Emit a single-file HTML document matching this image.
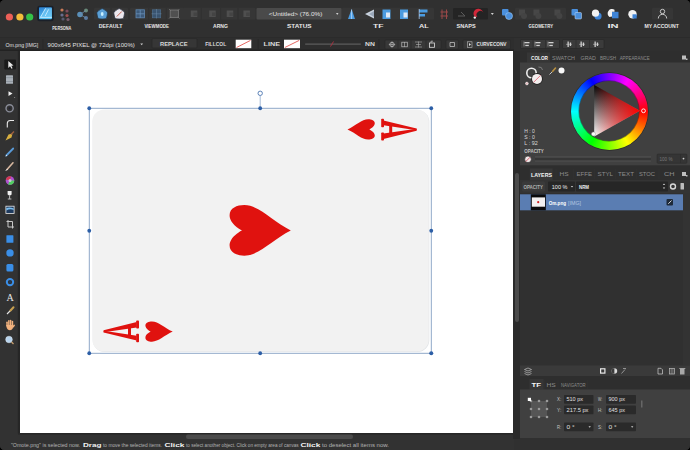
<!DOCTYPE html>
<html><head><meta charset="utf-8">
<style>
*{margin:0;padding:0;box-sizing:border-box}
html,body{width:690px;height:450px;overflow:hidden;background:#000}
body{position:relative;font-family:"Liberation Sans",sans-serif}
svg{position:absolute;left:0;top:0}
.wheel{position:absolute;left:570.5px;top:72.5px;width:77px;height:77px;border-radius:50%;
background:conic-gradient(from 90deg,#ff0000,#ffff00,#00ff00,#00ffff,#0000ff,#ff00ff,#ff0000);box-shadow:0 0 0 0.7px rgba(0,0,0,0.35)}
.wheel:after{content:"";position:absolute;left:8.5px;top:8.5px;width:60px;height:60px;border-radius:50%;background:#404040;box-shadow:0 0 0 0.7px rgba(0,0,0,0.35)}
</style></head><body>
<svg width="690" height="450" viewBox="0 0 690 450" font-family="Liberation Sans" id="base">
<!-- window -->
<rect x="0" y="0" width="690" height="450" rx="4.5" fill="#2f2f2f"/>
<!-- main toolbar -->
<path d="M0,4.5 A4.5,4.5 0 0 1 4.5,0 H685.5 A4.5,4.5 0 0 1 690,4.5 V37 H0 Z" fill="#303030"/>
<!-- ===== toolbar ===== -->
<g id="tb">
<circle cx="9.4" cy="17" r="3.6" fill="#ec5f57"/>
<circle cx="19.9" cy="17" r="3.6" fill="#f3bd3a"/>
<circle cx="29.7" cy="17" r="3.6" fill="#35c148"/>
<defs><linearGradient id="lg" x1="0" y1="0" x2="0.3" y2="1"><stop offset="0" stop-color="#2a7fd0"/><stop offset="1" stop-color="#56c4f6"/></linearGradient></defs>
<rect x="37.2" y="5.7" width="16.5" height="15.5" rx="2.5" fill="#1a2029"/>
<rect x="39" y="7.3" width="12.9" height="12" rx="0.8" fill="url(#lg)"/>
<path d="M40.3,17.6 L45.6,8.3 L51.9,8.3 L51.9,17.6 Z" fill="#7fd2fa" opacity="0.55"/>
<path d="M40.3,17.6 L45.6,8.3 M45.2,16 L48.5,9.5 M40.3,17.4 H51.9" stroke="#c8ecff" stroke-width="0.9" fill="none"/>
<circle cx="62.0" cy="10.0" r="1.6" fill="#c87a58"/>
<circle cx="67.0" cy="11.0" r="1.6" fill="#7a4b5b"/>
<circle cx="62.0" cy="15.0" r="1.6" fill="#6a6d8e"/>
<circle cx="67.0" cy="15.5" r="1.6" fill="#a05050"/>
<circle cx="63.0" cy="19.0" r="1.6" fill="#585a70"/>
<circle cx="68.0" cy="19.5" r="1.6" fill="#7a5a6a"/>
<circle cx="80" cy="14.5" r="2.8" fill="#5a8fb8"/><circle cx="86" cy="10.5" r="2" fill="#6a8a7a"/><circle cx="86" cy="18" r="2" fill="#5a7aa0"/><path d="M80,14.5 L86,10.5 M80,14.5 L86,18" stroke="#6b8aa6" stroke-width="0.8"/>
<rect x="94.0" y="7.8" width="34.0" height="11.8" rx="1.2" fill="#363636"/>
<rect x="130.0" y="7.8" width="54.0" height="11.8" rx="1.2" fill="#363636"/>
<rect x="183.0" y="7.8" width="72.5" height="11.8" rx="1.2" fill="#363636"/>
<rect x="342.0" y="7.8" width="92.0" height="11.8" rx="1.2" fill="#363636"/>
<rect x="515.0" y="7.8" width="51.0" height="11.8" rx="1.2" fill="#363636"/>
<rect x="652.0" y="7.8" width="21.0" height="11.8" rx="1.2" fill="#363636"/>
<path d="M111,8 V19.5 M148.7,8 V19.5 M166.2,8 V19.5 M201.4,8 V19.5 M220.6,8 V19.5 M238,8 V19.5" stroke="#2e2e2e" stroke-width="0.6"/>
<path d="M102.2,8.6 Q103,8.6 107.4,11.9 Q108,12.5 106.6,18 Q106.2,19 102.2,19 Q98.2,19 97.8,18 Q96.4,12.5 97,11.9 Q101.4,8.6 102.2,8.6 Z" fill="#5a9fd6" stroke="#203040" stroke-width="0.7"/><ellipse cx="102.2" cy="14" rx="1.4" ry="2" fill="#c8f0ff"/>
<path d="M119.2,8.6 Q120,8.6 124.4,11.9 Q125,12.5 123.6,18 Q123.2,19 119.2,19 Q115.2,19 114.8,18 Q113.4,12.5 114,11.9 Q118.4,8.6 119.2,8.6 Z" fill="#ece8ee" stroke="#202838" stroke-width="0.7"/><path d="M116.8,16.5 L121.8,11.5" stroke="#c06050" stroke-width="1"/>
<rect x="136" y="9.8" width="8.4" height="8" fill="#3d5a7a" stroke="#5f88b2" stroke-width="0.8"/><path d="M140.2,9.8 V17.8 M136,13.8 H144.4" stroke="#6f98c2" stroke-width="0.7"/>
<rect x="152.3" y="9.8" width="8.4" height="8" fill="#3a5470" stroke="#4f7090" stroke-width="0.6"/><path d="M151.5,13.8 H161.5 M156.5,9 V18.5" stroke="#6a8aa8" stroke-width="0.5"/>
<rect x="170.2" y="10" width="8.2" height="7.6" fill="#505050" stroke="#7a7a7a" stroke-width="0.8"/><path d="M169,9 L171,11 M179.5,9 L177.5,11 M169,18.6 L171,16.6 M179.5,18.6 L177.5,16.6" stroke="#7a7a7a" stroke-width="0.7"/>
<rect x="190.8" y="10.5" width="6.5" height="6.5" fill="#4f4f4f"/><rect x="193.5" y="12.5" width="3.5" height="3.5" fill="#444"/>
<rect x="209.2" y="10.5" width="6.5" height="6.5" fill="#4f4f4f"/><rect x="212.0" y="12.5" width="3.5" height="3.5" fill="#444"/>
<rect x="226.7" y="10.5" width="6.5" height="6.5" fill="#4f4f4f"/><rect x="229.4" y="12.5" width="3.5" height="3.5" fill="#444"/>
<rect x="243.4" y="10.5" width="6.5" height="6.5" fill="#4f4f4f"/><rect x="246.2" y="12.5" width="3.5" height="3.5" fill="#444"/>
<rect x="256.5" y="8" width="85" height="11.6" rx="1" fill="#4a4a4a"/>
<text x="268.8" y="15.8" textLength="53.5" lengthAdjust="spacingAndGlyphs" font-size="5.8" font-weight="normal" fill="#e6e6e6">&lt;Untitled&gt; (76.0%)</text>
<path d="M336,13 L338.5,13 L337.25,15 Z" fill="#cfcfcf"/>
<polygon points="351.6,9 355,19 348,19" fill="#4b9be0"/><path d="M351.6,9.5 V19" stroke="#cfe6ff" stroke-width="0.7"/>
<polygon points="374,9.5 374,18.5 365,14" fill="#c9d2de"/><polygon points="374,11 374,17 369,14" fill="#9aa8ba"/>
<rect x="382.5" y="9.5" width="8" height="9.5" fill="#4b9be0"/><rect x="386" y="12.5" width="4" height="5" fill="#dde8f5"/>
<rect x="400" y="9.5" width="8" height="9.5" fill="#4b9be0"/><rect x="403.5" y="12.5" width="4" height="5" fill="#dde8f5"/>
<rect x="419" y="9.5" width="8.5" height="3" fill="#4b9be0"/><rect x="419" y="14" width="6" height="2.5" fill="#4b9be0"/><path d="M419.2,9 V19" stroke="#a9c8ea" stroke-width="0.8"/>
<path d="M442,9.5 V19 M446.5,9.5 V19 M440.5,12 H448 M440.5,16 H448" stroke="#9a4848" stroke-width="1"/>
<rect x="453" y="8" width="35" height="11.6" rx="1" fill="#242424"/>
<path d="M458,16 H465 M461,12 L465,16" stroke="#5a5a5a" stroke-width="1"/>
<path d="M474.5,16.5 A4.5,4.5 0 0 1 482,10.5 L483.5,12.5 A2.2,2.2 0 0 0 477.3,17 Z" fill="#d0283a"/><circle cx="474.8" cy="17.6" r="1.2" fill="#eee"/>
<path d="M490.8,13 L493.8,13 L492.3,15 Z" fill="#d0d0d0"/>
<rect x="502" y="9" width="6.5" height="6.5" rx="1" fill="#4a8fdc"/><circle cx="509" cy="16" r="3.5" fill="#4a8fdc" stroke="#9ccaf5" stroke-width="0.6"/>
<rect x="519.0" y="9.5" width="6" height="6" fill="#474747"/><circle cx="524.0" cy="16" r="3" fill="#444"/>
<rect x="533.4" y="9.5" width="6" height="6" fill="#474747"/><circle cx="538.4" cy="16" r="3" fill="#444"/>
<rect x="554.4" y="9.5" width="6" height="6" fill="#474747"/><circle cx="559.4" cy="16" r="3" fill="#444"/>
<rect x="571.5" y="9" width="6.5" height="6.5" rx="1" fill="#4a8fdc"/><rect x="575" y="12.5" width="6.5" height="6.5" rx="1" fill="#4a8fdc" stroke="#cde3fa" stroke-width="0.5"/>
<circle cx="598" cy="16" r="3.6" fill="#3f84d6"/><circle cx="595.5" cy="13.2" r="3.6" fill="#f2f2f2"/>
<rect x="612" y="11.8" width="6.5" height="6.5" fill="#3f84d6"/><path d="M609.5,17 A4,4 0 0 1 614.5,9.8 L614.5,11.8 L612,11.8 L612,16.5 Z" fill="#f2f2f2"/>
<circle cx="632.5" cy="14.3" r="4.2" fill="#f2f2f2"/><rect x="632.5" y="14.3" width="4.2" height="4.2" fill="#3f84d6"/>
<circle cx="662.5" cy="11.5" r="2.2" fill="none" stroke="#d6d6d6" stroke-width="0.9"/><path d="M658.3,18.5 A4.2,4.2 0 0 1 666.7,18.5" fill="none" stroke="#d6d6d6" stroke-width="0.9"/>
<text x="52.3" y="30.4" textLength="19.1" lengthAdjust="spacingAndGlyphs" font-size="5.9" font-weight="bold" fill="#e8e8e8">PERSONA</text>
<text x="98.7" y="27.7" textLength="23.8" lengthAdjust="spacingAndGlyphs" font-size="5.9" font-weight="bold" fill="#e8e8e8">DEFAULT</text>
<text x="144.4" y="27.7" textLength="24.6" lengthAdjust="spacingAndGlyphs" font-size="5.9" font-weight="bold" fill="#e8e8e8">VIEWMODE</text>
<text x="213.0" y="27.7" textLength="14.8" lengthAdjust="spacingAndGlyphs" font-size="5.9" font-weight="bold" fill="#e8e8e8">ARNG</text>
<text x="287.0" y="27.7" textLength="24.6" lengthAdjust="spacingAndGlyphs" font-size="5.9" font-weight="bold" fill="#e8e8e8">STATUS</text>
<text x="373.0" y="27.7" textLength="10.5" lengthAdjust="spacingAndGlyphs" font-size="5.9" font-weight="bold" fill="#e8e8e8">TF</text>
<text x="419.0" y="27.7" textLength="9.7" lengthAdjust="spacingAndGlyphs" font-size="5.9" font-weight="bold" fill="#e8e8e8">AL</text>
<text x="456.5" y="27.7" textLength="19.1" lengthAdjust="spacingAndGlyphs" font-size="5.9" font-weight="bold" fill="#e8e8e8">SNAPS</text>
<text x="528.6" y="27.7" textLength="24.4" lengthAdjust="spacingAndGlyphs" font-size="5.9" font-weight="bold" fill="#e8e8e8">GEOMETRY</text>
<text x="607.4" y="27.7" textLength="11.1" lengthAdjust="spacingAndGlyphs" font-size="5.9" font-weight="bold" fill="#e8e8e8">IN</text>
<text x="644.4" y="27.7" textLength="34.5" lengthAdjust="spacingAndGlyphs" font-size="5.9" font-weight="bold" fill="#e8e8e8">MY ACCOUNT</text>
</g>
<!-- context toolbar -->
<rect x="0" y="37" width="514" height="14" fill="#2e2e2e"/><rect x="0" y="49.6" width="514" height="1.4" fill="#222222"/>
<g id="ctx">
<text x="5.5" y="46.6" textLength="32.8" lengthAdjust="spacingAndGlyphs" font-size="6.0" font-weight="normal" fill="#e0e0e0">Om.png [IMG]</text>
<rect x="42.5" y="39" width="0.8" height="10" fill="#262626"/>
<text x="47.6" y="46.6" textLength="87.2" lengthAdjust="spacingAndGlyphs" font-size="6.0" font-weight="normal" fill="#e0e0e0">900x645 PIXEL @ 72dpi (100%)</text>
<path d="M140.3,43.5 L143.1,43.5 L141.7,45.3 Z" fill="#cfcfcf"/>
<rect x="152" y="38.6" width="45" height="9.4" rx="1" fill="#363636" stroke="#262626" stroke-width="0.6"/>
<text x="160.0" y="46.4" textLength="27.5" lengthAdjust="spacingAndGlyphs" font-size="5.0" font-weight="bold" fill="#d8d8d8">REPLACE</text>
<text x="205.2" y="46.4" textLength="21.0" lengthAdjust="spacingAndGlyphs" font-size="5.0" font-weight="bold" fill="#d8d8d8">FILLCOL</text>
<rect x="235.7" y="39.7" width="15.6" height="8.5" fill="#ffffff"/><path d="M236.5,47.5 L250.5,40.4" stroke="#e0403a" stroke-width="0.8"/>
<rect x="257.8" y="39" width="0.8" height="10" fill="#262626"/>
<text x="263.5" y="46.4" textLength="16.5" lengthAdjust="spacingAndGlyphs" font-size="5.0" font-weight="bold" fill="#d8d8d8">LINE</text>
<rect x="284" y="39.7" width="16" height="8.5" fill="#ffffff"/><path d="M284.8,47.5 L299.2,40.4" stroke="#e0403a" stroke-width="0.8"/>
<rect x="305" y="43.4" width="56" height="1.3" rx="0.6" fill="#5c5c5c"/>
<path d="M330.5,46.5 L333.5,41.5" stroke="#b03040" stroke-width="0.9"/>
<text x="365.0" y="46.4" textLength="9.8" lengthAdjust="spacingAndGlyphs" font-size="5.0" font-weight="bold" fill="#d8d8d8">NN</text>
<rect x="378.5" y="39" width="0.8" height="10" fill="#262626"/>
<rect x="385" y="40" width="56" height="9" rx="1" fill="#383838" stroke="#262626" stroke-width="0.6"/>
<path d="M398,40.5 V48.5 M411,40.5 V48.5 M426,40.5 V48.5" stroke="#262626" stroke-width="0.6"/>
<circle cx="392" cy="44.5" r="2.2" fill="none" stroke="#cfcfcf" stroke-width="0.7"/><path d="M392,41.3 V47.7 M388.8,44.5 H395.2" stroke="#cfcfcf" stroke-width="0.5"/>
<rect x="401.8" y="42.2" width="5.5" height="4.6" fill="none" stroke="#bdbdbd" stroke-width="0.7"/><path d="M404.5,42 V47" stroke="#bdbdbd" stroke-width="0.6"/>
<path d="M415,42 H422 M415,47 H422 M418.5,41.5 V47.5 M416,44.5 H421" stroke="#b0b0b0" stroke-width="0.6"/>
<rect x="429.5" y="43" width="5" height="4.3" fill="none" stroke="#e0e0e0" stroke-width="0.8"/><path d="M431,43 V41.2 H433" stroke="#e0e0e0" stroke-width="0.6" fill="none"/>
<rect x="446" y="40" width="12.5" height="9" rx="1" fill="#383838" stroke="#262626" stroke-width="0.6"/>
<path d="M450,42.5 H454.5 V46.5 H450 Z" fill="none" stroke="#cfcfcf" stroke-width="0.7"/>
<rect x="463" y="40" width="47.5" height="9" rx="1" fill="#383838" stroke="#262626" stroke-width="0.6"/>
<rect x="467.5" y="41.8" width="4.5" height="5.5" fill="none" stroke="#bdbdbd" stroke-width="0.6"/><path d="M469,43 L471,44.5 L469,46 Z" fill="#e0e0e0"/>
<text x="476.5" y="46.4" textLength="30.0" lengthAdjust="spacingAndGlyphs" font-size="5.0" font-weight="bold" fill="#e4e4e4">CURVECONV</text>
</g>
<!-- left toolbar -->
<rect x="0" y="51" width="20" height="390" fill="#323232"/><rect x="17.8" y="51" width="2.2" height="382.5" fill="#262626"/>
<g id="left">
<rect x="4.3" y="59.5" width="11.7" height="10.1" rx="1" fill="#1a1a1a"/>
<path d="M8.3,61 L8.3,68 L10,66.3 L11.5,68.8 L12.6,68.2 L11.3,65.8 L13.5,65.6 Z" fill="#e8e8e8"/>
<rect x="6" y="75.2" width="7" height="8.5" rx="0.5" fill="#a9b0b8"/><rect x="6" y="77.5" width="7" height="0.6" fill="#7d858e"/><rect x="6" y="81" width="7" height="0.6" fill="#7d858e"/>
<path d="M8.5,91.3 L12.5,93.6 L8.5,96 Z" fill="#f0f0f0"/><circle cx="14.6" cy="97.5" r="0.6" fill="#888"/>
<circle cx="9.6" cy="108.3" r="3.6" fill="none" stroke="#8a8d99" stroke-width="1.4"/><circle cx="9.6" cy="108.3" r="1" fill="#202030"/>
<path d="M7.3,127.5 V123.5 Q7.3,120.5 10.3,120.5 H14" fill="none" stroke="#e8e8e8" stroke-width="1.1"/>
<path d="M5.5,140.5 L8.5,134.5 L12.5,133.5 L11.5,137.5 Z" fill="#d8b040"/><path d="M11,134.5 L14,131.5" stroke="#a06040" stroke-width="1.2"/>
<path d="M6.3,155.5 L13.2,148.5" stroke="#5a9bd8" stroke-width="1.8" stroke-linecap="round"/><path d="M5.8,156.2 L7,155" stroke="#e8e8e8" stroke-width="1"/>
<path d="M7,169.5 L13,162.8" stroke="#d8b8a0" stroke-width="1.6" stroke-linecap="round"/><path d="M5.8,170.8 L7.5,169" stroke="#f0f0f0" stroke-width="1"/>
<circle cx="10" cy="180.5" r="4.3" fill="#b050d0"/><path d="M10,180.5 L14.3,180.5 A4.3,4.3 0 0 1 8,184.3 Z" fill="#50d060"/><path d="M10,180.5 L5.8,179.5 A4.3,4.3 0 0 1 11,176.3 Z" fill="#d03a50"/><circle cx="10" cy="180.5" r="1.5" fill="#c8c8d8"/>
<path d="M7.6,190.9 H11.6 V194.5 Q9.6,196.5 7.6,194.5 Z" fill="#f0f0f0"/><path d="M9.6,195.5 V198.8 M7.8,199 H11.4" stroke="#e0e0e0" stroke-width="0.8"/>
<rect x="5.5" y="205.8" width="9" height="8" fill="#e8e8e8"/><rect x="6.3" y="206.6" width="7.4" height="6.4" fill="#1e3a5e"/><path d="M6.3,208 Q10,206.8 13.7,208.5 V210 Q10,208.5 6.3,210.5 Z" fill="#7ec0f0"/>
<path d="M8,220 V227 H14 M6.5,221.5 H12.5 V228.5" fill="none" stroke="#c8c8c8" stroke-width="1"/>
<rect x="6.4" y="235.3" width="7" height="7.5" rx="0.5" fill="#3a8ee6"/>
<circle cx="10" cy="252.9" r="3.7" fill="#3a8ee6"/>
<rect x="6.4" y="264.1" width="7" height="7.5" rx="1.5" fill="#3a8ee6"/>
<circle cx="10" cy="282.1" r="3.2" fill="none" stroke="#3a8ee6" stroke-width="2"/><circle cx="10" cy="282.1" r="1" fill="#163a6a"/>
<text x="6.4" y="300.8" font-family="Liberation Serif" font-size="10" fill="#e8e8e8">A</text>
<path d="M7,314 L11,310" stroke="#e8e8e8" stroke-width="1.1"/><path d="M10.5,310.5 L13.5,307.3" stroke="#c8a050" stroke-width="2" stroke-linecap="round"/>
<g fill="#f2b27e"><rect x="6.3" y="321.5" width="1.5" height="5" rx="0.75"/><rect x="8.1" y="320" width="1.5" height="6" rx="0.75"/><rect x="9.9" y="319.8" width="1.5" height="6" rx="0.75"/><rect x="11.7" y="320.8" width="1.5" height="5.5" rx="0.75"/><path d="M6.3,325 H13.2 Q13.6,330 10,330.3 Q7,330.3 6.3,326 Z"/><rect x="13" y="324.5" width="1.5" height="3.2" rx="0.75" transform="rotate(35 13.7 326)"/></g>
<circle cx="9" cy="339.5" r="3.3" fill="#b8d4ee" stroke="#dfe9f3" stroke-width="0.5"/><path d="M11.5,342 L13.5,344" stroke="#c8a070" stroke-width="1.2"/>
</g>
<!-- canvas -->
<rect x="20" y="51" width="493" height="382" fill="#ffffff"/>

<!-- ===== card ===== -->
<defs>
<linearGradient id="cardg" x1="0" y1="0" x2="0" y2="1">
<stop offset="0" stop-color="#f0f1f1"/><stop offset="0.97" stop-color="#eeefef"/><stop offset="1" stop-color="#dfe2e4"/>
</linearGradient>
</defs>
<rect x="92.8" y="110" width="336.5" height="242" rx="12" fill="#e0e3e6"/>
<rect x="92.3" y="109.5" width="336.5" height="242" rx="12" fill="#f2f2f2"/>
<g fill="#e0120f">
<path d="M 241.84,230.40 C 241.84,230.40 229.60,236.47 229.60,245.58 C 229.60,252.66 236.94,255.70 244.29,255.70 C 258.98,255.70 272.44,239.51 290.80,230.40 C 272.44,221.29 258.98,205.10 244.29,205.10 C 236.94,205.10 229.60,208.14 229.60,215.22 C 229.60,224.33 241.84,230.40 241.84,230.40 Z"/>
<g id="corner">
<path d="M 369.34,129.45 C 369.34,129.45 374.80,131.89 374.80,135.54 C 374.80,138.38 371.52,139.60 368.25,139.60 C 361.70,139.60 355.69,133.10 347.50,129.45 C 355.69,125.80 361.70,119.30 368.25,119.30 C 371.52,119.30 374.80,120.52 374.80,123.36 C 374.80,127.01 369.34,129.45 369.34,129.45 Z"/>
<rect x="381.2" y="118.8" width="2.8" height="8.5" rx="0.8"/>
<rect x="381.2" y="132.4" width="2.8" height="8.2" rx="0.8"/>
<polygon points="383.5,120.6 416.6,128.4 416.6,130.3 383.5,125.2"/>
<polygon points="383.5,133.6 416.6,128.7 416.6,130.7 383.5,138.9"/>
<rect x="389.2" y="124" width="3" height="10.5"/>
</g>
<use href="#corner" transform="rotate(180 260.1 230.5)"/>
</g>
<!-- selection -->
<g>
<rect x="89.25" y="108.25" width="342" height="245" fill="none" stroke="#7393bb" stroke-width="0.8"/>
<line x1="260.2" y1="95.5" x2="260.2" y2="108" stroke="#7d9cc6" stroke-width="0.7"/>
<circle cx="260.2" cy="93.3" r="2.2" fill="#fff" stroke="#5b82b8" stroke-width="1"/>
<g fill="#2c5ea6">
<circle cx="89.25" cy="108.25" r="1.9"/><circle cx="260.2" cy="108.25" r="1.9"/><circle cx="431.25" cy="108.25" r="1.9"/>
<circle cx="89.25" cy="230.75" r="1.9"/><circle cx="431.25" cy="230.75" r="1.9"/>
<circle cx="89.25" cy="353.25" r="1.9"/><circle cx="260.2" cy="353.25" r="1.9"/><circle cx="431.25" cy="353.25" r="2"/>
</g>
</g>
<!-- h scrollbar -->
<rect x="20" y="433" width="494" height="6" fill="#323232"/><rect x="18" y="433" width="496" height="1.6" fill="#282828"/>
<rect x="186" y="434.5" width="167" height="4.5" rx="2" fill="#4b4b4b"/>
<!-- status bar -->
<path d="M0,439 H514 V450 H4.5 A4.5,4.5 0 0 1 0,445.5 Z" fill="#323232"/>
<g id="status">
<text x="10.9" y="447.3" textLength="69.1" lengthAdjust="spacingAndGlyphs" font-size="5.8" font-weight="normal" fill="#b2b2b2">"Omote.png" is selected now.</text>
<text x="83.0" y="447.3" textLength="18.5" lengthAdjust="spacingAndGlyphs" font-size="5.2" font-weight="bold" fill="#f2f2f2">Drag</text>
<text x="103.0" y="447.3" textLength="59.0" lengthAdjust="spacingAndGlyphs" font-size="5.8" font-weight="normal" fill="#b2b2b2">to move the selected items.</text>
<text x="164.5" y="447.3" textLength="19.9" lengthAdjust="spacingAndGlyphs" font-size="5.2" font-weight="bold" fill="#f2f2f2">Click</text>
<text x="186.0" y="447.3" textLength="112.6" lengthAdjust="spacingAndGlyphs" font-size="5.8" font-weight="normal" fill="#b2b2b2">to select another object. Click on empty area of canvas</text>
<text x="300.4" y="447.3" textLength="19.9" lengthAdjust="spacingAndGlyphs" font-size="5.2" font-weight="bold" fill="#f2f2f2">Click</text>
<text x="322.0" y="447.3" textLength="67.0" lengthAdjust="spacingAndGlyphs" font-size="5.8" font-weight="normal" fill="#b2b2b2">to deselect all items now.</text>
</g>
<!-- right panel base -->
<path d="M514,37 H690 V445.5 A4.5,4.5 0 0 1 685.5,450 H514 Z" fill="#303030"/>
<rect x="0" y="37" width="690" height="1" fill="#2b2b2b"/>
<!-- v scrollbar -->
<rect x="513" y="51" width="7" height="388" fill="#2a2a2a"/>
<rect x="515" y="173" width="4" height="149" rx="2" fill="#4b4b4b"/>

<!-- ===== right panel ===== -->
<!-- align buttons -->
<rect x="520.5" y="39.5" width="39" height="9" rx="1" fill="#3b3b3b" stroke="#262626" stroke-width="0.6"/>
<rect x="562.5" y="39.5" width="41.5" height="9" rx="1" fill="#3b3b3b" stroke="#262626" stroke-width="0.6"/>
<!-- color tabs -->
<rect x="520" y="50.5" width="170" height="12" fill="#2e2e2e"/>
<rect x="527" y="52.5" width="23" height="10" fill="#363636"/>
<!-- color body -->
<rect x="520" y="62.5" width="170" height="103" fill="#404040"/>
<!-- layer tabs -->
<rect x="520" y="165.5" width="170" height="14.5" fill="#2e2e2e"/>
<rect x="529.8" y="168.4" width="22.7" height="11.6" fill="#383838"/>
<!-- opacity row -->
<rect x="520" y="180" width="170" height="13" fill="#343434"/>
<!-- layer list -->
<rect x="520" y="193" width="170" height="172" fill="#303030"/>
<rect x="683" y="193" width="7" height="172" fill="#333333"/>
<rect x="520" y="194.3" width="163" height="16" fill="#5a7db2"/>
<!-- layers bottom bar -->
<rect x="520" y="365.5" width="170" height="10.7" fill="#3a3a3a"/>
<!-- transform tabs -->
<rect x="520" y="376.2" width="170" height="13.3" fill="#2e2e2e"/>
<rect x="529.5" y="379" width="14" height="10.5" fill="#363636"/>
<!-- transform body -->
<rect x="520" y="389.5" width="170" height="48.5" fill="#404040"/>
<g id="rp">
<path d="M524.0,41.5 V46.5" stroke="#bfbfbf" stroke-width="0.6"/><rect x="524.5" y="42" width="5" height="1.3" fill="#d0d0d0"/><rect x="525.3" y="44.8" width="3.5" height="1.3" fill="#d0d0d0"/>
<path d="M535.0,41.5 V46.5" stroke="#bfbfbf" stroke-width="0.6"/><rect x="535.5" y="42" width="5" height="1.3" fill="#d0d0d0"/><rect x="536.3" y="44.8" width="3.5" height="1.3" fill="#d0d0d0"/>
<path d="M548.0,41.5 V46.5" stroke="#bfbfbf" stroke-width="0.6"/><rect x="548.5" y="42" width="5" height="1.3" fill="#d0d0d0"/><rect x="549.3" y="44.8" width="3.5" height="1.3" fill="#d0d0d0"/>
<path d="M566.0,44.3 H572.0" stroke="#bfbfbf" stroke-width="0.6"/><rect x="567.5" y="41.5" width="1.3" height="5.5" fill="#d0d0d0"/><rect x="569.8" y="42.5" width="1.3" height="3.5" fill="#d0d0d0"/>
<path d="M579.0,44.3 H585.0" stroke="#bfbfbf" stroke-width="0.6"/><rect x="580.5" y="41.5" width="1.3" height="5.5" fill="#d0d0d0"/><rect x="582.8" y="42.5" width="1.3" height="3.5" fill="#d0d0d0"/>
<path d="M593.0,44.3 H599.0" stroke="#bfbfbf" stroke-width="0.6"/><rect x="594.5" y="41.5" width="1.3" height="5.5" fill="#d0d0d0"/><rect x="596.8" y="42.5" width="1.3" height="3.5" fill="#d0d0d0"/>
<path d="M533,40 V48.5 M545.5,40 V48.5 M576,40 V48.5 M589.5,40 V48.5" stroke="#2a2a2a" stroke-width="0.6"/>
<text x="531.0" y="60.2" textLength="17.0" lengthAdjust="spacingAndGlyphs" font-size="5.6" font-weight="bold" fill="#f4f4f4">COLOR</text>
<text x="552.0" y="60.0" textLength="23.0" lengthAdjust="spacingAndGlyphs" font-size="5.0" font-weight="normal" fill="#8c8c8c">SWATCH</text>
<text x="580.5" y="60.0" textLength="15.5" lengthAdjust="spacingAndGlyphs" font-size="5.0" font-weight="normal" fill="#8c8c8c">GRAD</text>
<text x="600.0" y="60.0" textLength="16.0" lengthAdjust="spacingAndGlyphs" font-size="5.0" font-weight="normal" fill="#8c8c8c">BRUSH</text>
<text x="619.7" y="60.0" textLength="30.0" lengthAdjust="spacingAndGlyphs" font-size="5.0" font-weight="normal" fill="#8c8c8c">APPEARANCE</text>
<rect x="682" y="55.5" width="4" height="4" fill="#bdbdbd"/><rect x="686" y="58.5" width="1.5" height="1.5" fill="#bdbdbd"/>
<circle cx="531.5" cy="73" r="4.7" fill="none" stroke="#eeeeee" stroke-width="1.6"/>
<circle cx="537" cy="78.9" r="5.8" fill="#1e1e1e"/><circle cx="537" cy="78.9" r="5" fill="#f3eeee"/><path d="M533.5,82.4 L540.5,75.4" stroke="#e06070" stroke-width="0.8"/>
<circle cx="526.9" cy="83.5" r="2" fill="#f0e8e8" stroke="#1e1e1e" stroke-width="0.5"/><path d="M526,84.3 L527.8,82.7" stroke="#d05060" stroke-width="0.5"/>
<path d="M538.5,67 Q542,66.5 542.5,70" fill="none" stroke="#8a8a8a" stroke-width="0.8"/>
<path d="M549.5,74.5 L553,71" stroke="#d8d8d8" stroke-width="0.9"/><path d="M552.5,71.5 L555.5,68" stroke="#b89040" stroke-width="1.6" stroke-linecap="round"/>
<circle cx="561.5" cy="70.4" r="3" fill="#f8f8f8"/>
<text x="524.3" y="132.6" textLength="10.5" lengthAdjust="spacingAndGlyphs" font-size="6.2" font-weight="normal" fill="#d8d8d8">H : 0</text>
<text x="524.3" y="138.6" textLength="10.5" lengthAdjust="spacingAndGlyphs" font-size="6.2" font-weight="normal" fill="#d8d8d8">S : 0</text>
<text x="524.3" y="144.6" textLength="13.5" lengthAdjust="spacingAndGlyphs" font-size="6.2" font-weight="normal" fill="#d8d8d8">L : 92</text>
<text x="524.3" y="152.6" textLength="19.5" lengthAdjust="spacingAndGlyphs" font-size="5.0" font-weight="bold" fill="#c4c4c4">OPACITY</text>
<circle cx="528" cy="159.3" r="3.3" fill="#f0e8e8" stroke="#202020" stroke-width="0.6"/><path d="M525.8,161.5 L530.2,157.1" stroke="#d04050" stroke-width="0.8"/>
<rect x="535" y="156.5" width="116" height="1.2" fill="#555555"/><rect x="535" y="160.3" width="116" height="1.2" fill="#505050"/><rect x="535" y="157.7" width="116" height="2.6" fill="#363636"/>
<rect x="657" y="154" width="30" height="9.3" rx="1" fill="#353535" stroke="#2a2a2a" stroke-width="0.5"/>
<text x="659.5" y="160.8" textLength="13.0" lengthAdjust="spacingAndGlyphs" font-size="5.5" font-weight="normal" fill="#7a7a7a">100 %</text>
<rect x="680" y="154.5" width="0.5" height="8.5" fill="#2a2a2a"/><circle cx="683.5" cy="158.6" r="0.9" fill="#cfcfcf"/>
<text x="531.0" y="176.6" textLength="21.0" lengthAdjust="spacingAndGlyphs" font-size="5.6" font-weight="bold" fill="#f4f4f4">LAYERS</text>
<text x="559.6" y="176.3" textLength="9.1" lengthAdjust="spacingAndGlyphs" font-size="5.0" font-weight="normal" fill="#8c8c8c">HS</text>
<text x="576.6" y="176.3" textLength="15.4" lengthAdjust="spacingAndGlyphs" font-size="5.0" font-weight="normal" fill="#8c8c8c">EFFE</text>
<text x="597.5" y="176.3" textLength="15.5" lengthAdjust="spacingAndGlyphs" font-size="5.0" font-weight="normal" fill="#8c8c8c">STYL</text>
<text x="618.0" y="176.3" textLength="16.0" lengthAdjust="spacingAndGlyphs" font-size="5.0" font-weight="normal" fill="#8c8c8c">TEXT</text>
<text x="639.0" y="176.3" textLength="16.0" lengthAdjust="spacingAndGlyphs" font-size="5.0" font-weight="normal" fill="#8c8c8c">STOC</text>
<text x="664.0" y="176.3" textLength="10.5" lengthAdjust="spacingAndGlyphs" font-size="5.0" font-weight="normal" fill="#8c8c8c">CH</text>
<path d="M556,169 V179 M573.5,169 V179 M594.5,169 V179 M615.5,169 V179 M636.5,169 V179 M659,169 V179" stroke="#333" stroke-width="0.6"/>
<rect x="682" y="172" width="4" height="4" fill="#bdbdbd"/><rect x="686" y="175" width="1.5" height="1.5" fill="#bdbdbd"/>
<rect x="522" y="181.5" width="23" height="10" rx="1" fill="#3a3a3a"/>
<text x="523.5" y="188.6" textLength="19.5" lengthAdjust="spacingAndGlyphs" font-size="5.0" font-weight="bold" fill="#b0b0b0">OPACITY</text>
<rect x="548" y="181.5" width="27" height="10" rx="1" fill="#262626"/>
<text x="551.8" y="189.0" textLength="15.6" lengthAdjust="spacingAndGlyphs" font-size="6.2" font-weight="normal" fill="#eeeeee">100 %</text>
<path d="M570.8,186 L573.2,186 L572,187.6 Z" fill="#cfcfcf"/>
<rect x="576" y="181.5" width="92" height="10" rx="1" fill="#262626"/>
<text x="579.0" y="189.0" textLength="10.0" lengthAdjust="spacingAndGlyphs" font-size="5.6" font-weight="bold" fill="#eeeeee">NRM</text>
<path d="M662.8,185 L665.2,185 L664,183.5 Z M662.8,187.5 L665.2,187.5 L664,189 Z" fill="#cfcfcf"/>
<circle cx="673" cy="186.5" r="2.5" fill="none" stroke="#d8d8d8" stroke-width="1.4"/>
<rect x="680.5" y="183" width="3.5" height="6.5" rx="0.5" fill="#bdbdbd"/>
<rect x="530.8" y="194.3" width="15" height="16" fill="#0a0a0a"/><rect x="531.8" y="197.4" width="13.2" height="9.3" fill="#f2f0f0"/><circle cx="538.2" cy="202.2" r="1.1" fill="#d02020"/>
<text x="548.7" y="204.9" textLength="17.3" lengthAdjust="spacingAndGlyphs" font-size="6.2" font-weight="bold" fill="#ffffff">Om.png</text>
<text x="568.0" y="204.7" textLength="13.0" lengthAdjust="spacingAndGlyphs" font-size="5.2" font-weight="normal" fill="#b4c6e0">[IMG]</text>
<rect x="666.5" y="199" width="6.5" height="6.5" rx="1" fill="#1e2a3a"/><path d="M668.3,203.8 L671.5,200.5" stroke="#e8e8e8" stroke-width="0.9"/>
<path d="M524.5,369.5 L528,368 L531.5,369.5 L528,371 Z M524.5,371.5 L528,373 L531.5,371.5 M524.5,373.5 L528,375 L531.5,373.5" fill="none" stroke="#bdbdbd" stroke-width="0.7"/>
<rect x="600" y="368.2" width="5.5" height="5.5" fill="#e8e8e8"/><rect x="601.2" y="369.4" width="3.1" height="3.1" fill="#383838"/>
<circle cx="614.4" cy="371" r="2.8" fill="#d8d8d8"/><path d="M614.4,368.2 A2.8,2.8 0 0 0 614.4,373.8 Z" fill="#383838"/>
<path d="M621.5,373.5 L625,369.5 M623,368.5 H626" stroke="#a8a8a8" stroke-width="0.8"/>
<path d="M658,368.3 H661 L662.5,369.8 V374 H658 Z" fill="none" stroke="#cfcfcf" stroke-width="0.7"/>
<rect x="669.5" y="368.5" width="5" height="5.5" fill="none" stroke="#bdbdbd" stroke-width="0.7"/><path d="M671.2,368.5 V374 M672.9,368.5 V374" stroke="#bdbdbd" stroke-width="0.5"/>
<rect x="680" y="369" width="4.5" height="5.5" fill="#a8a8a8"/><rect x="679.3" y="368" width="6" height="0.8" fill="#bdbdbd"/>
<text x="531.5" y="387.2" textLength="9.5" lengthAdjust="spacingAndGlyphs" font-size="5.2" font-weight="bold" fill="#f4f4f4">TF</text>
<text x="546.5" y="387.0" textLength="9.2" lengthAdjust="spacingAndGlyphs" font-size="5.0" font-weight="normal" fill="#8c8c8c">HS</text>
<text x="561.0" y="387.0" textLength="24.7" lengthAdjust="spacingAndGlyphs" font-size="5.0" font-weight="normal" fill="#8c8c8c">NAVIGATOR</text>
<path d="M544.5,380 V389 M558,380 V389 M587.5,380 V389" stroke="#333" stroke-width="0.6"/>
<rect x="531" y="401" width="16" height="16" fill="#555555"/>
<circle cx="531.0" cy="401.0" r="1.3" fill="#9a9a9a"/>
<circle cx="539.0" cy="401.0" r="1.3" fill="#9a9a9a"/>
<circle cx="547.0" cy="401.0" r="1.3" fill="#9a9a9a"/>
<circle cx="531.0" cy="409.0" r="1.3" fill="#9a9a9a"/>
<circle cx="539.0" cy="409.0" r="1.3" fill="#9a9a9a"/>
<circle cx="547.0" cy="409.0" r="1.3" fill="#9a9a9a"/>
<circle cx="531.0" cy="417.0" r="1.3" fill="#9a9a9a"/>
<circle cx="539.0" cy="417.0" r="1.3" fill="#9a9a9a"/>
<circle cx="547.0" cy="417.0" r="1.3" fill="#9a9a9a"/>
<rect x="527.8" y="397.8" width="3.2" height="3.2" fill="#ffffff"/>
<rect x="564.0" y="395.0" width="29.5" height="8.8" rx="0.8" fill="#2a2a2a"/><text x="566.5" y="401.2" textLength="16.5" lengthAdjust="spacingAndGlyphs" font-size="5.6" font-weight="normal" fill="#e0e0e0">510 px</text><text x="557.0" y="401.2" textLength="4.2" lengthAdjust="spacingAndGlyphs" font-size="5.6" font-weight="normal" fill="#c4c4c4">X:</text>
<rect x="564.0" y="405.5" width="29.5" height="8.8" rx="0.8" fill="#2a2a2a"/><text x="566.5" y="411.7" textLength="22.0" lengthAdjust="spacingAndGlyphs" font-size="5.6" font-weight="normal" fill="#e0e0e0">217.5 px</text><text x="557.0" y="411.7" textLength="4.2" lengthAdjust="spacingAndGlyphs" font-size="5.6" font-weight="normal" fill="#c4c4c4">Y:</text>
<rect x="606.0" y="395.0" width="30.0" height="8.8" rx="0.8" fill="#2a2a2a"/><text x="608.5" y="401.2" textLength="16.5" lengthAdjust="spacingAndGlyphs" font-size="5.6" font-weight="normal" fill="#e0e0e0">900 px</text><text x="598.0" y="401.2" textLength="4.2" lengthAdjust="spacingAndGlyphs" font-size="5.6" font-weight="normal" fill="#c4c4c4">W:</text>
<rect x="606.0" y="405.5" width="30.0" height="8.8" rx="0.8" fill="#2a2a2a"/><text x="608.5" y="411.7" textLength="16.5" lengthAdjust="spacingAndGlyphs" font-size="5.6" font-weight="normal" fill="#e0e0e0">645 px</text><text x="598.0" y="411.7" textLength="4.2" lengthAdjust="spacingAndGlyphs" font-size="5.6" font-weight="normal" fill="#c4c4c4">H:</text>
<rect x="564.0" y="422.5" width="29.5" height="8.8" rx="0.8" fill="#2a2a2a"/><text x="566.5" y="428.7" textLength="8.2" lengthAdjust="spacingAndGlyphs" font-size="5.6" font-weight="normal" fill="#e0e0e0">0 °</text><text x="557.0" y="428.7" textLength="4.2" lengthAdjust="spacingAndGlyphs" font-size="5.6" font-weight="normal" fill="#c4c4c4">R:</text><path d="M588.5,426.3 L590.9,426.3 L589.7,427.7 Z" fill="#cfcfcf"/>
<rect x="606.0" y="422.5" width="30.0" height="8.8" rx="0.8" fill="#2a2a2a"/><text x="608.5" y="428.7" textLength="8.2" lengthAdjust="spacingAndGlyphs" font-size="5.6" font-weight="normal" fill="#e0e0e0">0 °</text><text x="598.0" y="428.7" textLength="4.2" lengthAdjust="spacingAndGlyphs" font-size="5.6" font-weight="normal" fill="#c4c4c4">S:</text><path d="M631.0,426.3 L633.4,426.3 L632.2,427.7 Z" fill="#cfcfcf"/>
<rect x="641" y="400.5" width="1.5" height="7" fill="#666"/>
</g>
</svg>
<div class="wheel"></div>
<svg width="690" height="450" viewBox="0 0 690 450" style="position:absolute;left:0;top:0">
<defs>
<linearGradient id="tg1" gradientUnits="userSpaceOnUse" x1="0" y1="85" x2="0" y2="136.5"><stop offset="0" stop-color="#000"/><stop offset="1" stop-color="#fff"/></linearGradient>
<linearGradient id="tg2" gradientUnits="userSpaceOnUse" x1="594.2" y1="0" x2="639.9" y2="0"><stop offset="0" stop-color="#ff0000" stop-opacity="0"/><stop offset="1" stop-color="#ff0000" stop-opacity="1"/></linearGradient>
</defs>
<polygon points="594.2,85 639.9,110.8 594.2,136.6" fill="url(#tg1)"/>
<polygon points="594.2,85 639.9,110.8 594.2,136.6" fill="url(#tg2)"/>
<circle cx="593.5" cy="134" r="2.1" fill="#fafafa" stroke="#888" stroke-width="0.4"/>
<circle cx="643.5" cy="110.8" r="1.9" fill="none" stroke="#ffffff" stroke-width="0.9"/>
</svg>

</body></html>
